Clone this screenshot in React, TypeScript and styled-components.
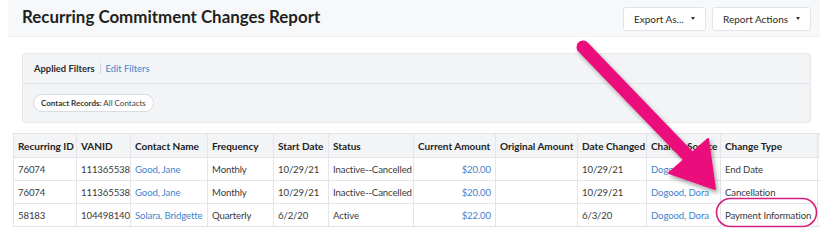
import styled, { createGlobalStyle } from "styled-components";

const GlobalStyle = createGlobalStyle`
  body {
    margin: 0;
    background: #fff;
    font-family: "Lato", "Noto Sans", sans-serif;
    color: #2b2b2b;
    overflow: hidden;
  }
`;

type Row = {
  id: string;
  vanid: string;
  name: string;
  frequency: string;
  start: string;
  status: string;
  current: string;
  original: string;
  changed: string;
  source: string;
  type: string;
};

const rows: Row[] = [
  {
    id: "76074",
    vanid: "111365538",
    name: "Good, Jane",
    frequency: "Monthly",
    start: "10/29/21",
    status: "Inactive--Cancelled",
    current: "$20.00",
    original: "",
    changed: "10/29/21",
    source: "Dogood, Dora",
    type: "End Date",
  },
  {
    id: "76074",
    vanid: "111365538",
    name: "Good, Jane",
    frequency: "Monthly",
    start: "10/29/21",
    status: "Inactive--Cancelled",
    current: "$20.00",
    original: "",
    changed: "10/29/21",
    source: "Dogood, Dora",
    type: "Cancellation",
  },
  {
    id: "58183",
    vanid: "104498140",
    name: "Solara, Bridgette",
    frequency: "Quarterly",
    start: "6/2/20",
    status: "Active",
    current: "$22.00",
    original: "",
    changed: "6/3/20",
    source: "Dogood, Dora",
    type: "Payment Information",
  },
];

const columns = [
  { label: "Recurring ID", width: 63 },
  { label: "VANID", width: 54 },
  { label: "Contact Name", width: 77 },
  { label: "Frequency", width: 66 },
  { label: "Start Date", width: 55 },
  { label: "Status", width: 85 },
  { label: "Current Amount", width: 82 },
  { label: "Original Amount", width: 82 },
  { label: "Date Changed", width: 69 },
  { label: "Change Source", width: 74 },
  { label: "Change Type", width: 97 },
  { label: "", width: 90 },
];

export default function App() {
  return (
    <>
      <GlobalStyle />
      <Page>
        <HeaderBar>
          <Title>Recurring Commitment Changes Report</Title>
          <Actions>
            <DropButton $width={83}>
              Export As...
              <Caret />
            </DropButton>
            <DropButton $width={99}>
              Report Actions
              <Caret />
            </DropButton>
          </Actions>
        </HeaderBar>

        <FilterPanel>
          <FilterHead>
            <FilterTitle>Applied Filters</FilterTitle>
            <Divider />
            <Link>Edit Filters</Link>
          </FilterHead>
          <FilterBody>
            <Pill>
              <strong>Contact Records:</strong> All Contacts
            </Pill>
          </FilterBody>
        </FilterPanel>

        <Table>
          <colgroup>
            {columns.map((c, i) => (
              <col key={i} style={{ width: c.width }} />
            ))}
          </colgroup>
          <thead>
            <tr>
              {columns.map((c, i) => (
                <Th key={i}>{c.label}</Th>
              ))}
            </tr>
          </thead>
          <tbody>
            {rows.map((r, i) => (
              <tr key={i}>
                <Td>{r.id}</Td>
                <Td>{r.vanid}</Td>
                <Td $link>{r.name}</Td>
                <Td>{r.frequency}</Td>
                <Td>{r.start}</Td>
                <Td>{r.status}</Td>
                <Td $link $right>
                  {r.current}
                </Td>
                <Td $right>{r.original}</Td>
                <Td>{r.changed}</Td>
                <Td $link>{r.source}</Td>
                <Td>{r.type}</Td>
                <Td />
              </tr>
            ))}
          </tbody>
        </Table>

        <Overlay width="820" height="230" viewBox="0 0 820 230">
          <defs>
            <filter id="shadow" x="-20%" y="-20%" width="140%" height="140%">
              <feDropShadow dx="2" dy="3" stdDeviation="2" floodColor="#000" floodOpacity="0.35" />
            </filter>
          </defs>
          <g filter="url(#shadow)" fill="#ec0c7c" stroke="#ec0c7c">
            <line x1="583" y1="47" x2="688" y2="156" strokeWidth="13" strokeLinecap="round" />
            <polygon points="715,189 669,173 708,139" strokeWidth="2" strokeLinejoin="round" />
          </g>
          <rect x="716.5" y="198.5" width="100" height="28" rx="14" fill="none" stroke="#d6207f" strokeWidth="1.6" />
        </Overlay>
      </Page>
    </>
  );
}

const Page = styled.div`
  position: relative;
  width: 820px;
  height: 230px;
  padding-left: 8px;
  box-sizing: border-box;
  overflow: hidden;
`;

const HeaderBar = styled.div`
  height: 36px;
  background: #f7f8f9;
  border-bottom: 1px solid #eef0f2;
  display: flex;
  align-items: center;
  justify-content: space-between;
  padding: 0 9px 0 14px;
`;

const Title = styled.h1`
  margin: 0;
  font-size: 16.9px;
  font-weight: 700;
  color: #1f1f1f;
  margin-top: -4px;
`;

const Actions = styled.div`
  display: flex;
  gap: 6px;
  margin-top: 1px;
`;

const DropButton = styled.button<{ $width: number }>`
  width: ${(p) => p.$width}px;
  height: 24px;
  background: #fff;
  border: 1px solid #e1e4e8;
  border-radius: 3px;
  padding: 0 10px;
  font-family: inherit;
  font-size: 10px;
  color: #2b2b2b;
  display: flex;
  align-items: center;
  justify-content: space-between;
`;

const Caret = styled.span`
  width: 0;
  height: 0;
  border-left: 2.5px solid transparent;
  border-right: 2.5px solid transparent;
  border-top: 3px solid #333;
`;

const FilterPanel = styled.div`
  margin: 16px 9px 0 14px;
  height: 70px;
  box-sizing: border-box;
  background: #f3f4f6;
  border: 1px solid #e6e8eb;
  border-radius: 3px;
  display: flex;
  flex-direction: column;
`;

const FilterHead = styled.div`
  height: 29px;
  border-bottom: 1px solid #e3e5e8;
  display: flex;
  align-items: center;
  padding-left: 11px;
  font-size: 9.4px;
`;

const FilterTitle = styled.span`
  font-weight: 700;
  color: #2b2b2b;
`;

const Divider = styled.span`
  width: 1px;
  height: 11px;
  background: #d5d8dc;
  margin: 0 5px;
`;

const Link = styled.span`
  color: #3d84cf;
`;

const FilterBody = styled.div`
  flex: 1;
  display: flex;
  align-items: center;
  padding-left: 10px;
`;

const Pill = styled.span`
  height: 18px;
  box-sizing: border-box;
  display: inline-flex;
  align-items: center;
  padding: 0 7px;
  background: #fff;
  border: 1px solid #d9dce0;
  border-radius: 9px;
  font-size: 8px;
  color: #444;
  white-space: pre;

  strong {
    font-weight: 700;
    color: #333;
  }
`;

const Table = styled.table`
  margin: 10px 0 0 5px;
  border-collapse: collapse;
  table-layout: fixed;
  width: 894px;
  font-size: 10px;
  border-top: 1px solid #e3e5e8;
`;

const Th = styled.th`
  height: 23px;
  padding: 0 4px;
  text-align: left;
  font-weight: 700;
  background: #f3f4f6;
  border: 1px solid #e3e5e8;
  white-space: nowrap;
  overflow: hidden;
  color: #222;
`;

const Td = styled.td<{ $link?: boolean; $right?: boolean }>`
  height: 22px;
  padding: 0 4px;
  border: 1px solid #e3e5e8;
  white-space: nowrap;
  overflow: hidden;
  font-size: 9.6px;
  letter-spacing: -0.12px;
  color: ${(p) => (p.$link ? "#3d84cf" : "#3a3a3a")};
  text-align: ${(p) => (p.$right ? "right" : "left")};
`;

const Overlay = styled.svg`
  position: absolute;
  top: 0;
  left: 0;
  pointer-events: none;
`;
